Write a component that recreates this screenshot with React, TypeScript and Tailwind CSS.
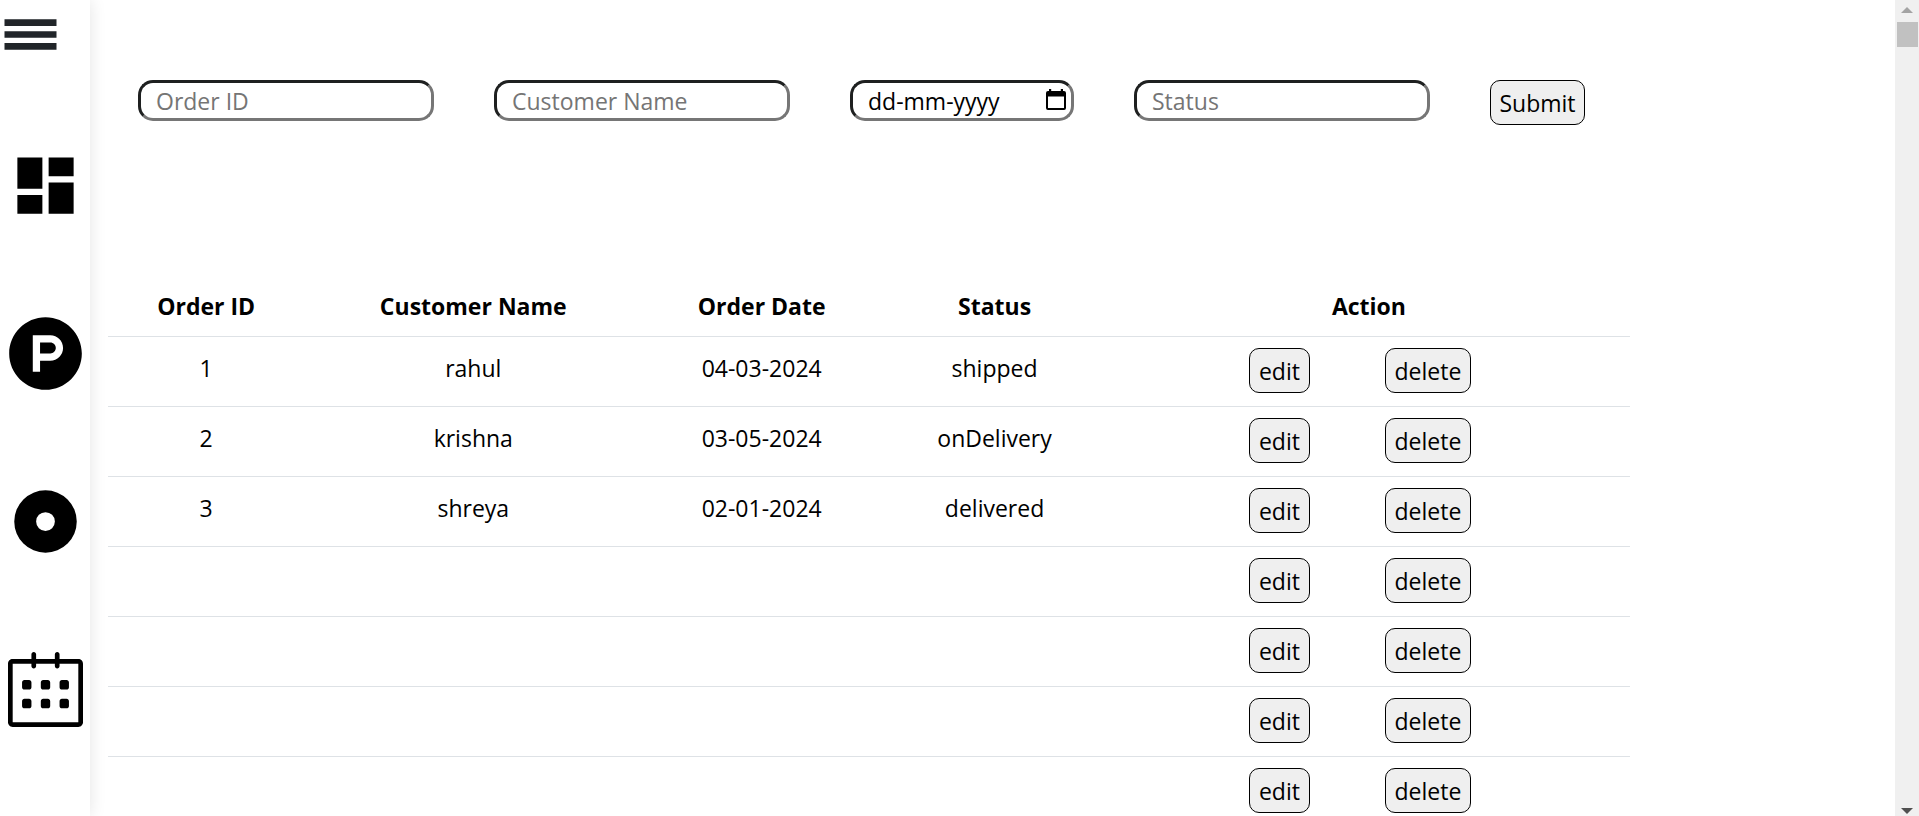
import type { ReactNode } from "react";
import { FaProductHunt } from "react-icons/fa";
import { MdDashboard } from "react-icons/md";
import { SlCalender } from "react-icons/sl";

type Order = { id: string; customer: string; date: string; status: string };

const orders: Order[] = [
  { id: "1", customer: "rahul", date: "04-03-2024", status: "shipped" },
  { id: "2", customer: "krishna", date: "03-05-2024", status: "onDelivery" },
  { id: "3", customer: "shreya", date: "02-01-2024", status: "delivered" },
  ...Array.from({ length: 4 }, () => ({ id: "", customer: "", date: "", status: "" })),
];

const fieldClass =
  "h-[41px] rounded-[15px] border-3 border-t-[#1e2020] border-l-[#1e2020] border-r-[#767676] border-b-[#767676] bg-white pt-px pl-[15px] outline-none";

const buttonClass = "h-[45px] rounded-[10px] border border-black bg-[#efefef] pt-0.5";

function DiscIcon() {
  return (
    <svg viewBox="0 0 24 24" className="size-[75px]" fill="currentColor" aria-hidden="true">
      <path
        fillRule="evenodd"
        d="M12 2a10 10 0 1 0 0 20a10 10 0 1 0 0-20zM12 9a3 3 0 1 1 0 6a3 3 0 1 1 0-6z"
      />
    </svg>
  );
}

function NavLink({ label, children }: { label: string; children: ReactNode }) {
  return (
    <a href="#" aria-label={label} className="block text-black">
      {children}
    </a>
  );
}

function Sidebar() {
  return (
    <aside className="z-10 flex w-[90px] shrink-0 flex-col bg-white shadow-[0_0_16px_rgba(0,0,0,0.11)]">
      <button type="button" aria-label="Toggle menu" className="mt-[19px] ml-1 self-start text-[#212529]">
        <svg viewBox="0 0 53 31" className="h-[31px] w-[53px]" fill="currentColor" aria-hidden="true">
          <path d="M.5 .3h52v6.7h-52zM.5 12.3h52v6.5h-52zM.5 24h52v6.7h-52z" />
        </svg>
      </button>
      <nav className="mt-[98px] flex flex-col items-center gap-[93px]">
        <NavLink label="Dashboard">
          <MdDashboard className="size-[75px]" />
        </NavLink>
        <NavLink label="Products">
          <FaProductHunt className="size-[75px]" />
        </NavLink>
        <NavLink label="Orders">
          <DiscIcon />
        </NavLink>
        <NavLink label="Calendar">
          <SlCalender className="size-[75px]" />
        </NavLink>
      </nav>
    </aside>
  );
}

function Filters() {
  return (
    <form className="flex items-start gap-[60px] pt-20 pl-[30px]" onSubmit={(e) => e.preventDefault()}>
      <input aria-label="Order ID" placeholder="Order ID" className={`${fieldClass} w-[296px] placeholder:text-[#757575]`} />
      <input aria-label="Customer Name" placeholder="Customer Name" className={`${fieldClass} w-[296px] placeholder:text-[#757575]`} />
      <div className="relative">
        <input aria-label="Order Date" placeholder="dd-mm-yyyy" className={`${fieldClass} w-[224px] placeholder:text-black`} />
        <button type="button" aria-label="Pick a date" className="absolute top-[9px] right-2">
          <svg viewBox="0 0 20 21" className="h-[21px] w-5" aria-hidden="true">
            <path
              fillRule="evenodd"
              d="M3 0h2.200v2h9.600V0H17v2h1a2 2 0 0 1 2 2v15a2 2 0 0 1-2 2H2a2 2 0 0 1-2-2V4a2 2 0 0 1 2-2h1zM2 7.500v11.500h16V7.500z"
            />
          </svg>
        </button>
      </div>
      <input aria-label="Status" placeholder="Status" className={`${fieldClass} w-[296px] placeholder:text-[#757575]`} />
      <button type="submit" className={`${buttonClass} w-[95px]`}>
        Submit
      </button>
    </form>
  );
}

function OrdersTable() {
  return (
    <table className="mt-[151px] w-full max-w-[1522px] table-fixed border-collapse text-center">
      <colgroup>
        <col className="w-[12.9%]" />
        <col className="w-[22.2%]" />
        <col className="w-[15.7%]" />
        <col className="w-[14.9%]" />
        <col />
      </colgroup>
      <thead>
        <tr className="h-[60px] border-b border-[#dee2e6] leading-9">
          <th className="pb-3 align-bottom">Order ID</th>
          <th className="pb-3 align-bottom">Customer Name</th>
          <th className="pb-3 align-bottom">Order Date</th>
          <th className="pb-3 align-bottom">Status</th>
          <th className="pb-3 align-bottom">Action</th>
        </tr>
      </thead>
      <tbody>
        {orders.map((order, i) => (
          <tr key={i} className="h-[70px] border-b border-[#dee2e6] leading-[38px]">
            <td className="py-3 align-top">{order.id}</td>
            <td className="py-3 align-top">{order.customer}</td>
            <td className="py-3 align-top">{order.date}</td>
            <td className="py-3 align-top">{order.status}</td>
            <td className="pt-[11px] align-top">
              <div className="flex justify-center gap-[75px] pr-[18px]">
                <button type="button" className={`${buttonClass} w-[61px] leading-9`}>
                  edit
                </button>
                <button type="button" className={`${buttonClass} w-[86px] leading-9`}>
                  delete
                </button>
              </div>
            </td>
          </tr>
        ))}
      </tbody>
    </table>
  );
}

function ScrollRail() {
  return (
    <div className="flex w-6 shrink-0 flex-col items-center bg-[#f0f0f0]" aria-hidden="true">
      <svg viewBox="0 0 12 6" className="mt-[7px] h-1.5 w-3" fill="#a3a3a3">
        <path d="M6 0l6 6H0z" />
      </svg>
      <div className="mt-[9px] h-[25px] w-[21px] bg-[#c1c1c1]" />
      <svg viewBox="0 0 12 6" className="mt-auto mb-[2px] h-1.5 w-3" fill="#505050">
        <path d="M0 0h12L6 6z" />
      </svg>
    </div>
  );
}

export default function App() {
  return (
    <div className="flex h-screen overflow-hidden bg-white font-['Open_Sans','Noto_Sans',sans-serif] text-[23px] text-black">
      <Sidebar />
      <main className="min-w-0 flex-1 overflow-y-auto pl-[18px] [scrollbar-width:none]">
        <Filters />
        <OrdersTable />
      </main>
      <ScrollRail />
    </div>
  );
}
